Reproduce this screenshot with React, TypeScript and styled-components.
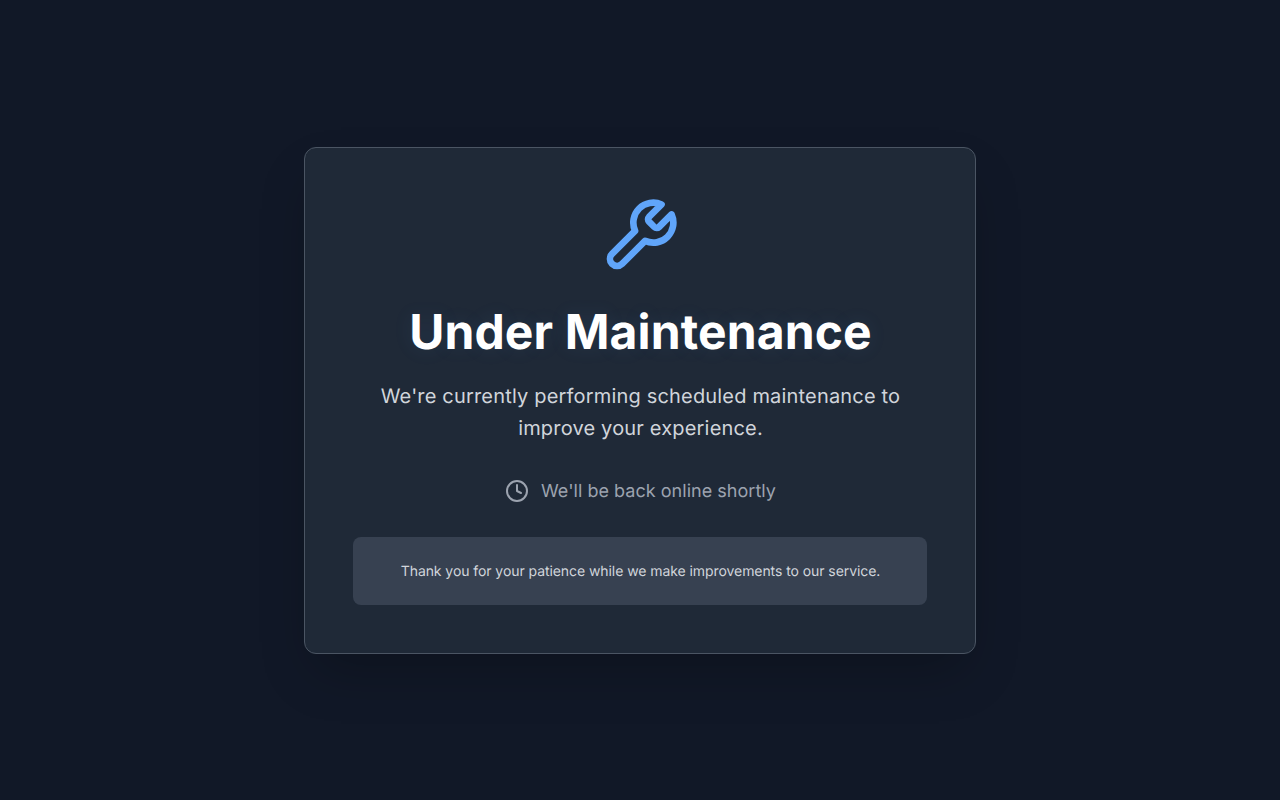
import React from 'react';
import styled, { createGlobalStyle } from 'styled-components';
import { Clock } from 'lucide-react';

const GlobalStyle = createGlobalStyle`
  *, *::before, *::after {
    box-sizing: border-box;
  }

  body {
    margin: 0;
    background: #111827;
    font-family: Inter, sans-serif;
    text-rendering: geometricPrecision;
  }
`;

const Page = styled.div`
  min-height: 100vh;
  display: flex;
  align-items: center;
  justify-content: center;
  padding: 1rem;
  background: #111827;
`;

const Card = styled.main`
  width: 100%;
  max-width: 42rem;
  padding: 3rem;
  text-align: center;
  background: #1f2937;
  border: 1px solid #4b5563;
  border-radius: 12px;
  box-shadow: 0 25px 50px -12px rgba(0, 0, 0, 0.25);
`;

const IconWrapper = styled.div`
  display: flex;
  justify-content: center;
  margin-bottom: 2rem;
  color: #60a5fa;
`;

const Title = styled.h1`
  margin: 0 0 1.5rem;
  padding-left: 1px;
  color: #fff;
  font-size: 3rem;
  font-weight: 700;
  line-height: 1;
  letter-spacing: 0.13px;
  text-shadow: 0 0 20px rgba(96, 165, 250, 0.1);
`;

const Message = styled.p`
  margin: 0 0 2rem;
  padding-left: 1px;
  color: #d1d5db;
  font-size: 1.25rem;
  line-height: 1.625;
  letter-spacing: 0.18px;
`;

const Status = styled.div`
  display: flex;
  align-items: center;
  justify-content: center;
  gap: 0.75rem;
  margin-bottom: 2rem;
  padding-left: 1px;
  color: #9ca3af;
  font-size: 1.125rem;
  line-height: 1.75rem;
`;

const StatusText = styled.span`
  margin: 1px 0 -1px;
  letter-spacing: 0.03px;
`;

const Note = styled.div`
  padding: 25px 1.5rem 23px;
  background: #374151;
  border-radius: 8px;
`;

const NoteText = styled.p`
  margin: 0;
  padding-left: 1px;
  color: #d1d5db;
  font-size: 0.875rem;
  line-height: 1.25rem;
  letter-spacing: -0.07px;
`;

const WrenchIcon: React.FC = () => (
  <svg
    width="80"
    height="80"
    viewBox="0 0 24 24"
    fill="none"
    stroke="currentColor"
    strokeWidth="2"
    strokeLinecap="round"
    strokeLinejoin="round"
  >
    <path d="M14.7 6.3a1 1 0 0 0 0 1.4l1.6 1.6a1 1 0 0 0 1.4 0l3.77-3.77a6 6 0 0 1-7.94 7.94l-6.91 6.91a2.12 2.12 0 0 1-3-3l6.91-6.91a6 6 0 0 1 7.94-7.94l-3.76 3.76z" />
  </svg>
);

const App: React.FC = () => {
  return (
    <>
      <GlobalStyle />
      <Page>
        <Card>
          <IconWrapper>
            <WrenchIcon />
          </IconWrapper>
          <Title>Under Maintenance</Title>
          <Message>
            We're currently performing scheduled maintenance to improve your experience.
          </Message>
          <Status>
            <Clock size={24} />
            <StatusText>We'll be back online shortly</StatusText>
          </Status>
          <Note>
            <NoteText>
              Thank you for your patience while we make improvements to our service.
            </NoteText>
          </Note>
        </Card>
      </Page>
    </>
  );
};

export default App;
